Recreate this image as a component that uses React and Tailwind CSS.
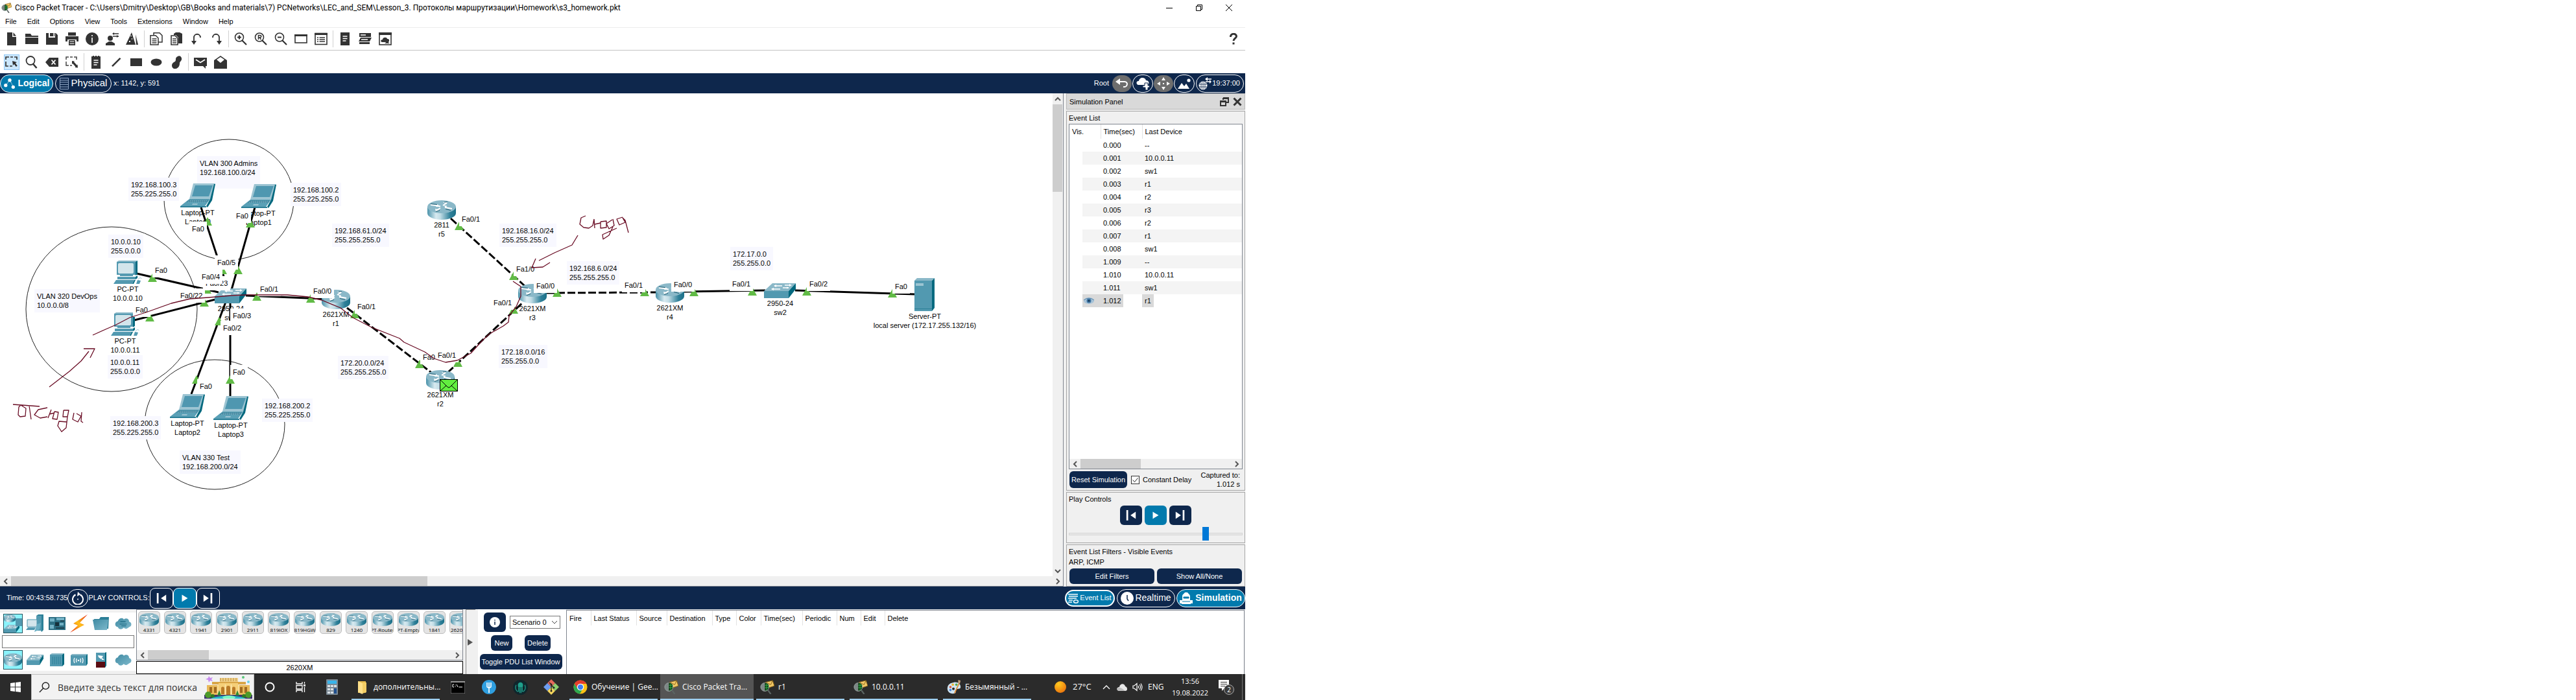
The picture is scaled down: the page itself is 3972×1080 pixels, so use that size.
import React from "react";

const NAVY = "#0e274c";

/* ---------- shared drawings ---------- */

function Gradients() {
  return (
    <svg width="0" height="0" className="absolute" aria-hidden="true">
      <defs>
        <linearGradient id="metal" x1="0" x2="1" y1="0" y2="0">
          <stop offset="0" stopColor="#4a92aa" />
          <stop offset="0.3" stopColor="#d8eaf0" />
          <stop offset="0.45" stopColor="#c2dde6" />
          <stop offset="0.8" stopColor="#2f8099" />
          <stop offset="1" stopColor="#1d7088" />
        </linearGradient>
        <linearGradient id="cloudFill" x1="0" x2="1" y1="0" y2="1">
          <stop offset="0" stopColor="#3f8ba3" />
          <stop offset="1" stopColor="#7fb9cc" />
        </linearGradient>
        <linearGradient id="bolt" x1="1" x2="0" y1="0" y2="1">
          <stop offset="0" stopColor="#e5261a" />
          <stop offset="0.5" stopColor="#ffc21a" />
          <stop offset="1" stopColor="#e5261a" />
        </linearGradient>
        <radialGradient id="sun" cx="0.35" cy="0.25" r="0.9">
          <stop offset="0" stopColor="#ffc91f" />
          <stop offset="1" stopColor="#e8690b" />
        </radialGradient>
      </defs>
    </svg>
  );
}

function RouterArt({ className }) {
  return (
    <svg viewBox="0 0 44 30" className={className} preserveAspectRatio="none" aria-hidden="true">
      <path d="M0 10v10c0 5.500 9.800 10 22 10s22-4.500 22-10V10z" fill="url(#metal)" />
      <ellipse cx="22" cy="10" rx="22" ry="10" fill="#8ab8c8" />
      <g stroke="#fff" strokeWidth="2" fill="none">
        <path d="M5 7l12 1.500M15 8.500l5 1M27 11l11 2" />
        <path d="M30 4l-6 4M13 16l7-4" />
      </g>
      <g fill="#fff">
        <path d="M15 6l5 4-7 0zM25 8l5 .5-1 3zM24 3l7 0-2 3zM12 13l1 4 6-2z" />
      </g>
      <g stroke="#1c5b70" strokeWidth="1" fill="none">
        <path d="M5 5.500l10 1M26 3l5-.5M28 13.500l8 2M13 17.500l6-2" />
      </g>
    </svg>
  );
}

function SwitchArt({ className }) {
  return (
    <svg viewBox="0 0 49 23" className={className} preserveAspectRatio="none" aria-hidden="true">
      <path d="M0 12L13 0h36L38 12z" fill="#8ab8c8" />
      <path d="M0 12h38v11H0z" fill="#5299b0" />
      <path d="M38 12L49 0v9L38 23z" fill="#04697f" />
      <g stroke="#fff" strokeWidth="1.300" fill="none">
        <path d="M16 4h12M32 3h9M12 9h13M29 7h9" />
      </g>
      <path d="M15 4l4-2v4zM43 3l-4-2v4zM11 9l4-2v4zM39 7l-4-1.500v3z" fill="#fff" />
    </svg>
  );
}

function LaptopArt({ className }) {
  return (
    <svg viewBox="0 0 54 37" className={className} preserveAspectRatio="none" aria-hidden="true">
      <path d="M20 0h34l-2 5-6 19H14z" fill="#9cc4d2" />
      <path d="M23 3h27l-6 17H18z" fill="#4f97b0" />
      <path d="M52 1h2l-5 25-7 11-2-2 6-11z" fill="#04697f" />
      <path d="M14 24h32L38 35H0z" fill="#5aa0b6" />
      <path d="M15 25h29l-3 4H9z" fill="#468ba2" />
      <path d="M15 26.500h27M12 28.500h28" stroke="#8ab8c8" strokeWidth="0.700" strokeDasharray="2 1" />
      <path d="M0 35h40v2H0z" fill="#2b7f97" />
      <path d="M19 31h8l-1 2h-8z" fill="#9cc4d2" />
    </svg>
  );
}

function PcArt({ className }) {
  return (
    <svg viewBox="0 0 44 36" className={className} preserveAspectRatio="none" aria-hidden="true">
      <path d="M5 2l3-2h29l-3 2z" fill="#8ab8c8" />
      <path d="M34 2l3-2v21l-3 2z" fill="#04697f" />
      <path d="M5 2h29v20H5z" fill="#5299b0" />
      <rect x="7" y="4" width="24" height="16" rx="2" fill="#d3e5eb" />
      <path d="M10 22h20v2H10zM6 25h28v4H6z" fill="#5299b0" />
      <path d="M34 25l3-2v4l-3 2z" fill="#04697f" />
      <path d="M4 30h28l-3 6H0z" fill="#5299b0" />
      <path d="M32 30h2l-3 6h-2z" fill="#04697f" />
      <path d="M37 30l5 1-2 5h-5z" fill="#5299b0" />
      <path d="M38 29c2-3 5-3 5-1" stroke="#9cc4d2" fill="none" />
    </svg>
  );
}

function ServerArt({ className }) {
  return (
    <svg viewBox="0 0 31 51" className={className} preserveAspectRatio="none" aria-hidden="true">
      <path d="M0 4l4-4h27l-4 4z" fill="#8ab8c8" />
      <path d="M0 4h27v47H0z" fill="#5299b0" />
      <path d="M27 4l4-4v46l-4 5z" fill="#04697f" />
      <path d="M2 8h12v4H2z" fill="#9cc4d2" />
      <path d="M0 47.500h27" stroke="#2b7f97" />
    </svg>
  );
}

/* ---------- toolbar icons, 20x20 ---------- */

const ICONS = {
  newFile: <path d="M3 0h8v7h6v13H3zM12.500 0L17 5.500h-4.500z" />,
  open: <path d="M0 2h8l2 3h10v2H0zM0 8h20v10H0z" />,
  save: <path d="M1 1h4v7h10V1h1l3 3v15H1zM7 1h5v5H7zM13 1h1v5h-1z" />,
  print: (
    <>
      <path d="M4 0h12v5H4zM0 6h20v8h-3v-3H3v3H0z" />
      <path d="M5 12h10v8H5z" />
      <path d="M6.500 14h7v1h-7zM6.500 17h7v1h-7z" fill="#fff" />
    </>
  ),
  info: (
    <>
      <circle cx="10" cy="10" r="10" />
      <path d="M9 4h2v2H9zM9 8h2v8H9z" fill="#ddd" />
    </>
  ),
  user: (
    <>
      <circle cx="7" cy="9" r="4" />
      <path d="M0 20v-3l5-3h4l5 3v3z" />
      <path d="M11 2h9M11 6h9" stroke="#333" strokeWidth="1.500" />
      <path d="M10 2l3-2v4zM20 6l-3-2v4z" />
    </>
  ),
  wizard: (
    <>
      <path d="M9 0l6 19H0z" />
      <path d="M15 3l4 16h-3z" />
      <path d="M5 13h2v2H5zM9 9h1v2H9zM7 5h2v1H7z" fill="#fff" />
    </>
  ),
  copy: (
    <>
      <path d="M6 .8h9l4 4V15H6z" fill="#fff" stroke="#333" strokeWidth="1.500" />
      <path d="M1 4.800h8l4 4V19H1z" fill="#fff" stroke="#333" strokeWidth="1.500" />
      <path d="M3.500 10h7M3.500 13h7M3.500 16h7" stroke="#333" strokeWidth="1.500" />
    </>
  ),
  paste: (
    <>
      <path d="M6 2l3-2h6l4 2v15h-6V8L9 4H6z" />
      <path d="M2 5h6l4 4v10H2z" fill="#fff" stroke="#333" strokeWidth="1.600" />
      <path d="M4 10h6M4 13h6M4 16h6" stroke="#333" strokeWidth="1.500" />
    </>
  ),
  undo: (
    <>
      <path d="M6 15V8c0-7 10-7 10 0" fill="none" stroke="#333" strokeWidth="1.800" />
      <path d="M2 13h8l-4 6z" />
    </>
  ),
  redo: (
    <>
      <path d="M14 15V8c0-7-10-7-10 0" fill="none" stroke="#333" strokeWidth="1.800" />
      <path d="M10 13h8l-4 6z" />
    </>
  ),
  zoomIn: (
    <>
      <circle cx="8" cy="7.500" r="6.500" fill="none" stroke="#333" strokeWidth="1.600" />
      <path d="M12 12l7 7M8 4.500v6M5 7.500h6" stroke="#333" strokeWidth="2.200" />
    </>
  ),
  zoomReset: (
    <>
      <circle cx="8" cy="7.500" r="6.500" fill="none" stroke="#333" strokeWidth="1.600" />
      <path d="M12 12l7 7" stroke="#333" strokeWidth="2.200" />
      <path d="M6.500 11V4.500h2c3 0 3 3.300 0 3.300h-2M8.500 8l2 3" fill="none" stroke="#333" strokeWidth="1.500" />
    </>
  ),
  zoomOut: (
    <>
      <circle cx="8" cy="7.500" r="6.500" fill="none" stroke="#333" strokeWidth="1.600" />
      <path d="M12 12l7 7M5 7.500h6" stroke="#333" strokeWidth="2.200" />
    </>
  ),
  windowBox: (
    <>
      <rect x="1" y="4" width="18" height="12" fill="#fff" stroke="#333" strokeWidth="1.600" />
      <path d="M0 3h20v3H0z" />
    </>
  ),
  listBox: (
    <>
      <rect x="1" y="1.500" width="18" height="17" fill="#fff" stroke="#333" strokeWidth="1.600" />
      <path d="M0 1h20v3H0z" />
      <path d="M4 8h2M7.500 8H16M4 11h2M7.500 11H16M4 14h2M7.500 14H16" stroke="#333" strokeWidth="1.700" />
    </>
  ),
  notes: (
    <>
      <path d="M3 0h14v20H3z" />
      <path d="M6.500 6h7M6.500 9.500h7M6.500 13h5" stroke="#fff" strokeWidth="1.400" />
    </>
  ),
  servers: (
    <>
      <path d="M1 1h18v6H1zM3 8h17l-3 6H0zM1 15h16v3H1z" />
      <path d="M3 4h8M4 11h10" stroke="#fff" strokeWidth="1.300" />
    </>
  ),
  cloudWindow: (
    <>
      <rect x="1" y="1" width="18" height="18" fill="#fff" stroke="#333" strokeWidth="1.600" />
      <path d="M0 0h20v4H0z" />
      <path d="M5 15c-3-1-2-4 1-4 0-4 7-4 7-1 4-1 4 5 1 5zM13 14l4 3H9z" />
    </>
  ),
  select: (
    <>
      <path d="M1 6V2h5M8 2h4M14 2h4v4M1 9v7h4M7 16h4" fill="none" stroke="#333" strokeWidth="1.700" />
      <path d="M11 8l7 2-2.200 1.500 3 4-2 1.500-3-4L12 15z" />
    </>
  ),
  inspect: (
    <>
      <circle cx="8" cy="7.500" r="6.500" fill="none" stroke="#333" strokeWidth="1.800" />
      <path d="M11.500 12l6 7" stroke="#333" strokeWidth="2.600" />
    </>
  ),
  erase: (
    <>
      <path d="M6 3h14v14H6l-6-7z" />
      <path d="M9.500 6.500l6 7M15.500 6.500l-6 7" stroke="#fff" strokeWidth="1.800" />
    </>
  ),
  resize: (
    <>
      <path d="M1 6V2h4M7 2h4M13 2h4v4M1 9v6h4M7 15h3" fill="none" stroke="#444" strokeWidth="1.500" />
      <path d="M10 8l4 .5-1 1 4.500 5 1-1 .5 5-4.500-.5 1-1-4.500-5-1 1z" />
    </>
  ),
  notepad: (
    <>
      <path d="M3 1h2V0h2v1h2V0h2v1h2V0h2v1h2v19H3z" />
      <path d="M6.500 7h7M6.500 10.500h7M6.500 14h5" stroke="#fff" strokeWidth="1.400" />
    </>
  ),
  line: <path d="M3 15.500L15.500 3l2 1.500L5 17z" />,
  rect: <path d="M1 4h18v12H1z" />,
  ellipse: <ellipse cx="10" cy="10" rx="8.500" ry="5.500" />,
  freeform: <path d="M12 1c3-2 7 1 6 5-1 3-3 3-3 6 0 6-5 9-9 8-4-2-4-8 0-10 3-1 3-3 3-5 0-2 1-3 3-4z" />,
  simplePdu: (
    <>
      <path d="M0 3h20v13h-2v4l-4-4H0z" />
      <path d="M3 6l7 4.500L17 6" fill="none" stroke="#fff" strokeWidth="1.700" />
    </>
  ),
  complexPdu: (
    <>
      <path d="M0 7l10-7 10 7v13H0z" />
      <path d="M4 6l6-4 6 4-6 5z" fill="#fff" />
    </>
  ),
};

function ToolButton({ name, label, active }) {
  return (
    <button aria-label={label} className="flex w-[31px] items-center justify-center">
      <span
        className={
          active
            ? "flex size-6 items-center justify-center border border-[#90c8f6] bg-[#cce8ff]"
            : "flex size-6 items-center justify-center"
        }
      >
        <svg viewBox="0 0 20 20" className="size-5" fill="#333333" aria-hidden="true">
          {ICONS[name]}
        </svg>
      </span>
    </button>
  );
}

function Divider() {
  return (
    <span className="flex w-1.5 justify-center">
      <span className="w-px bg-[#d0d0d0]" />
    </span>
  );
}

function TracerIcon({ className }) {
  return (
    <svg viewBox="0 0 24 24" className={className} aria-hidden="true">
      <path d="M9 4l12-3 3 9-12 4z" fill="#f1c766" stroke="#8a6417" />
      <path d="M9 4l9 4 3-7" fill="none" stroke="#8a6417" />
      <circle cx="8" cy="12" r="7" fill="#7d8786" stroke="#9aa5a3" />
      <path d="M8 5a7 7 0 0 1 6 3v7a7 7 0 0 1-6 3z" fill="#0b3c12" />
      <path d="M8 9h7M8 13h7M11 6v12" stroke="#36b14a" strokeWidth="1" />
      <path d="M13 17l5 7" stroke="#5b6463" strokeWidth="2.500" />
    </svg>
  );
}

/* ---------- top of the window ---------- */

function TitleBar() {
  return (
    <header className="flex h-6 shrink-0 items-center pl-0.5">
      <TracerIcon className="size-4 shrink-0" />
      <h1 className="ml-[5px] whitespace-nowrap font-[Roboto,'Open_Sans',sans-serif] text-[12px] leading-6">
        Cisco Packet Tracer - C:\Users\Dmitry\Desktop\GB\Books and materials\7) PCNetworks\LEC_and_SEM\Lesson_3.
        Протоколы маршрутизации\Homework\s3_homework.pkt
      </h1>
      <div className="ml-auto flex pr-0.5 text-black">
        <button aria-label="Minimize" className="flex w-[46px] items-center justify-center">
          <svg viewBox="0 0 10 10" className="size-2.5" stroke="currentColor" fill="none">
            <path d="M0 5.500h10" />
          </svg>
        </button>
        <button aria-label="Restore" className="flex w-[46px] items-center justify-center">
          <svg viewBox="0 0 10 10" className="size-2.5" stroke="currentColor" fill="none">
            <path d="M.5 2.500h7v7h-7zM2.500 2.500v-2h7v7h-2" />
          </svg>
        </button>
        <button aria-label="Close" className="flex w-[46px] items-center justify-center">
          <svg viewBox="0 0 10 10" className="size-2.5" stroke="currentColor" fill="none">
            <path d="M0 0l10 10M10 0L0 10" />
          </svg>
        </button>
      </div>
    </header>
  );
}

const MENUS = ["File", "Edit", "Options", "View", "Tools", "Extensions", "Window", "Help"];

function MenuBar() {
  return (
    <nav className="flex h-[19px] shrink-0 items-center gap-4 border-b border-[#ececec] pl-2 text-[11px]">
      {MENUS.map((m) => (
        <button key={m}>{m}</button>
      ))}
    </nav>
  );
}

function Toolbars() {
  return (
    <>
      <div className="flex h-[35px] shrink-0 items-stretch border-b border-[#c3c3c3] py-1 pl-0.5">
        <ToolButton name="newFile" label="New" />
        <ToolButton name="open" label="Open" />
        <ToolButton name="save" label="Save" />
        <ToolButton name="print" label="Print" />
        <ToolButton name="info" label="Network information" />
        <ToolButton name="user" label="User profile" />
        <ToolButton name="wizard" label="Activity wizard" />
        <Divider />
        <ToolButton name="copy" label="Copy" />
        <ToolButton name="paste" label="Paste" />
        <ToolButton name="undo" label="Undo" />
        <ToolButton name="redo" label="Redo" />
        <Divider />
        <ToolButton name="zoomIn" label="Zoom in" />
        <ToolButton name="zoomReset" label="Zoom reset" />
        <ToolButton name="zoomOut" label="Zoom out" />
        <ToolButton name="windowBox" label="Toggle workspace" />
        <ToolButton name="listBox" label="Viewport list" />
        <Divider />
        <ToolButton name="notes" label="Palette" />
        <ToolButton name="servers" label="Custom devices" />
        <ToolButton name="cloudWindow" label="Cluster" />
        <button aria-label="Help contents" className="ml-auto mr-3 flex items-center">
          <svg viewBox="0 0 12 18" className="h-[18px] w-3" fill="none" stroke="#333" strokeWidth="3" aria-hidden="true">
            <path d="M1.500 6C1 0 10.500 0 10.500 5c0 3-4.500 3.500-4.500 7" />
            <path d="M6 14.500v3" />
          </svg>
        </button>
      </div>
      <div className="flex h-[35px] shrink-0 items-stretch py-1 pl-0.5">
        <ToolButton name="select" label="Select" active />
        <ToolButton name="inspect" label="Inspect" />
        <ToolButton name="erase" label="Delete" />
        <ToolButton name="resize" label="Resize shape" />
        <Divider />
        <ToolButton name="notepad" label="Place note" />
        <ToolButton name="line" label="Draw line" />
        <ToolButton name="rect" label="Draw rectangle" />
        <ToolButton name="ellipse" label="Draw ellipse" />
        <ToolButton name="freeform" label="Draw freeform" />
        <Divider />
        <ToolButton name="simplePdu" label="Add simple PDU" />
        <ToolButton name="complexPdu" label="Add complex PDU" />
      </div>
    </>
  );
}

function ViewBar() {
  return (
    <div className="flex h-[31px] shrink-0 items-center bg-[#0e274c] text-[11px] text-white">
      <button className="flex h-7 w-[82px] items-center justify-center gap-0.5 rounded-[14px] border border-white bg-[#027aad] text-[14px] font-bold">
        <svg viewBox="0 0 20 18" className="h-4 w-5" fill="#fff" aria-hidden="true">
          <path d="M3 12L10 3l6 11" stroke="#fff" fill="none" strokeDasharray="2 1" />
          <circle cx="3" cy="12" r="3" />
          <circle cx="10" cy="3" r="3" />
          <circle cx="16" cy="15" r="3" />
        </svg>
        Logical
      </button>
      <button className="ml-[3px] flex h-7 w-[87px] items-center justify-center gap-1 rounded-[14px] border border-white text-[15px]">
        <svg viewBox="0 0 14 18" className="h-[18px] w-3.5" fill="none" stroke="#8fa6c4" aria-hidden="true">
          <path d="M.5.500h13v17H.500zM1 4h12M1 7h12M1 10.500h12M1 14h12" />
        </svg>
        Physical
      </button>
      <span className="ml-[3px]">x: 1142, y: 591</span>
      <span className="ml-auto mr-[5px]">Root</span>
      <button aria-label="Back" className="flex h-[26px] w-[30px] items-center justify-center rounded-full bg-[#6d6d6d]">
        <svg viewBox="0 0 20 16" className="h-4 w-5" aria-hidden="true">
          <path d="M4 5h10c6 0 5 9-2 8" fill="none" stroke="#fff" strokeWidth="2" />
          <path d="M0 5l7-5v10z" fill="#fff" />
        </svg>
      </button>
      <button aria-label="New cluster" className="ml-px flex h-7 w-8 items-center justify-center rounded-full border border-white">
        <svg viewBox="0 0 20 20" className="size-5" fill="#fff" aria-hidden="true">
          <path d="M3 12c-4-1-3-7 1-6 1-7 10-6 11-1 5 0 6 6 2 7z" />
          <path d="M13 9h5v4h3v3h-3v4h-4v-4h-4v-3h3z" stroke="#0e274c" />
        </svg>
      </button>
      <button aria-label="Move object" className="ml-px flex h-[26px] w-[30px] items-center justify-center rounded-full bg-[#6d6d6d]">
        <svg viewBox="0 0 20 20" className="size-5" fill="#fff" aria-hidden="true">
          <path d="M10 0l3 5H7zM10 20l3-5H7zM0 10l5-3v6zM20 10l-5-3v6zM9 9h2v2H9z" />
        </svg>
      </button>
      <button aria-label="Set background" className="ml-px flex h-7 w-8 items-center justify-center rounded-full border border-white">
        <svg viewBox="0 0 20 16" className="h-4 w-5" fill="#fff" aria-hidden="true">
          <path d="M0 16L6 7l4 5 3-4 5 8z" />
          <circle cx="17" cy="3" r="2.600" />
        </svg>
      </button>
      <button className="ml-0.5 mr-0.5 flex h-7 w-[74px] items-center justify-between rounded-[14px] border border-white pl-[3px] pr-[5px]">
        <svg viewBox="0 0 20 20" className="size-5" aria-hidden="true">
          <circle cx="7" cy="13" r="6.500" fill="#fff" />
          <path d="M1 11h12M1 15h12M4 8v10M7 7v12M10 8v10" stroke="#0e274c" strokeWidth="0.800" />
          <path d="M11 3h9M11 7h7" stroke="#fff" strokeWidth="1.500" />
          <path d="M10 3l4-3v6zM20 7l-3-3v6z" fill="#fff" />
        </svg>
        19:37:00
      </button>
    </div>
  );
}

/* ---------- topology: window coordinates, shifted to the canvas when drawn ---------- */

const CANVAS_Y = 144;

const NOTES = [
  { x: 304, y: 241, w: 97, h: 50, lines: ["VLAN 300 Admins", "192.168.100.0/24"] },
  { x: 198, y: 274, lines: ["192.168.100.3", "255.225.255.0"] },
  { x: 448, y: 282, lines: ["192.168.100.2", "255.225.255.0"] },
  { x: 167, y: 362, lines: ["10.0.0.10", "255.0.0.0"] },
  { x: 53, y: 446, lines: ["VLAN 320 DevOps", "10.0.0.0/8"] },
  { x: 166, y: 548, lines: ["10.0.0.11", "255.0.0.0"] },
  { x: 170, y: 642, lines: ["192.168.200.3", "255.225.255.0"] },
  { x: 404, y: 615, lines: ["192.168.200.2", "255.225.255.0"] },
  { x: 277, y: 695, lines: ["VLAN 330 Test", "192.168.200.0/24"] },
  { x: 512, y: 345, lines: ["192.168.61.0/24", "255.255.255.0"] },
  { x: 521, y: 549, lines: ["172.20.0.0/24", "255.255.255.0"] },
  { x: 770, y: 345, lines: ["192.168.16.0/24", "255.255.255.0"] },
  { x: 874, y: 403, lines: ["192.168.6.0/24", "255.255.255.0"] },
  { x: 769, y: 532, lines: ["172.18.0.0/16", "255.255.0.0"] },
  { x: 1126, y: 381, lines: ["172.17.0.0", "255.255.0.0"] },
];

const SIZES = {
  laptop: [54, 37, LaptopArt],
  pc: [44, 36, PcArt],
  router: [44, 30, RouterArt],
  switch: [49, 23, SwitchArt],
  server: [31, 51, ServerArt],
};

const DEVICES = [
  { kind: "laptop", x: 278, y: 283, lines: ["Laptop-PT", "Laptop0"] },
  { kind: "laptop", x: 372, y: 284, lines: ["Laptop-PT", "Laptop1"] },
  { kind: "laptop", x: 262, y: 608, lines: ["Laptop-PT", "Laptop2"] },
  { kind: "laptop", x: 329, y: 611, lines: ["Laptop-PT", "Laptop3"] },
  { kind: "pc", x: 175, y: 402, lines: ["PC-PT", "10.0.0.10"] },
  { kind: "pc", x: 171, y: 482, lines: ["PC-PT", "10.0.0.11"] },
  { kind: "switch", x: 331, y: 445, lines: ["2950-24", "sw1"] },
  { kind: "router", x: 496, y: 447, lines: ["2621XM", "r1"] },
  { kind: "router", x: 659, y: 309, lines: ["2811", "r5"] },
  { kind: "router", x: 799, y: 438, lines: ["2621XM", "r3"] },
  { kind: "router", x: 657, y: 571, lines: ["2621XM", "r2"] },
  { kind: "router", x: 1011, y: 437, lines: ["2621XM", "r4"] },
  { kind: "switch", x: 1178, y: 437, lines: ["2950-24", "sw2"] },
  { kind: "server", x: 1410, y: 429, lines: ["Server-PT", "local server (172.17.255.132/16)"] },
];

const LINKS = [
  [310, 320, 355, 457],
  [393, 320, 357, 447],
  [211, 422, 337, 451],
  [207, 494, 332, 462],
  [379, 456, 498, 461],
  [295, 608, 348, 466],
  [355, 611, 355, 466],
  [535, 475, 668, 577, true],
  [690, 575, 807, 466, true],
  [695, 337, 809, 441, true],
  [843, 452, 1012, 451, true],
  [1054, 450, 1180, 448],
  [1226, 448, 1411, 454],
];

/* centre of base */
const LIGHTS = [
  [320, 348], [386, 351], [343, 423], [367, 423], [235, 435], [319, 453], [315, 473], [231, 496],
  [396, 464], [479, 467], [547, 491], [338, 502], [303, 592], [355, 592], [647, 568], [706, 566],
  [792, 484], [792, 432], [708, 355], [859, 458], [994, 457], [1070, 457], [1160, 456], [1244, 456], [1376, 459],
];

/* text left, text middle */
const PORTS = [
  [317, 437, "Fa0/23"], [296, 353, "Fa0"], [364, 333, "Fa0"], [335, 405, "Fa0/5"], [311, 427, "Fa0/4"],
  [278, 456, "Fa0/22"], [239, 417, "Fa0"], [401, 446, "Fa0/1"], [483, 449, "Fa0/0"], [551, 473, "Fa0/1"],
  [209, 478, "Fa0"], [359, 487, "Fa0/3"], [344, 506, "Fa0/2"], [359, 574, "Fa0"], [308, 596, "Fa0"],
  [652, 551, "Fa0/0"], [675, 548, "Fa0/1"], [712, 338, "Fa0/1"], [796, 415, "Fa1/0"], [827, 441, "Fa0/0"],
  [761, 467, "Fa0/1"], [963, 440, "Fa0/1"], [1039, 439, "Fa0/0"], [1129, 438, "Fa0/1"], [1248, 438, "Fa0/2"],
  [1380, 442, "Fa0"],
];

const INK = [
  "M143 517L163 508L179 501L200 490L225 482L264 468L293 461L321 459L357 456L379 455H443L475 458L496 463L525 475L544 490L573 505L616 522L623 528L655 543L669 553L687 559L705 556L726 545L744 525L755 515L776 503L784 497L785 487L796 473L803 457V442L791 434",
  "M76 597L107 573L125 557L137 542M129 538H146L139 552",
  "M20 624L61 627M32 625L29 628L28 640L31 643L39 642L40 630L32 625M45 626L48 647M73 629L59 632L53 640L62 645L73 643M79 632L74 645M76 639L84 637M84 635L81 646L88 647L90 636L84 635M98 633L97 643L104 643L106 633L98 633M104 643L102 660L95 666L89 657L91 650L103 651M114 637L112 647L120 651L125 642L118 638M126 636L125 650L128 652",
  "M903 333L896 336L894 346L900 351L908 352L914 348L916 338M916 338L917 352M917 346L926 344M926 342L926 352L935 351L935 341L926 342M944 339L935 345L939 353L947 348L945 338M945 350L939 363L930 369L929 362L951 352M960 335L951 338L955 347L964 343L960 336L964 340L969 359",
  "M891 363L882 378L855 390L831 402M826 399L820 413L837 412L848 405",
];

function Topology() {
  return (
    <div className="relative min-w-0 flex-1 overflow-hidden bg-white text-[11px] leading-[14px] text-black">
      <svg className="absolute inset-0 size-full" aria-hidden="true">
        <g transform="translate(0 -144)" fill="none" stroke="#222">
          <ellipse cx="353" cy="308" rx="100" ry="93" />
          <ellipse cx="172" cy="477" rx="132" ry="127" />
          <ellipse cx="331" cy="655" rx="108" ry="100" />
        </g>
      </svg>
      {NOTES.map((n, i) => (
        <div
          key={i}
          className="absolute whitespace-nowrap bg-[#f8f8ff] p-1"
          style={{ left: n.x, top: n.y - CANVAS_Y, width: n.w, height: n.h }}
        >
          {n.lines.map((l) => (
            <div key={l}>{l}</div>
          ))}
        </div>
      ))}
      {DEVICES.map((d, i) => {
        const [w, h] = SIZES[d.kind];
        return (
          <div
            key={i}
            className="absolute -translate-x-1/2 whitespace-nowrap text-center"
            style={{ left: d.x + Math.round(w / 2), top: d.y + h + 1 - CANVAS_Y }}
          >
            {d.lines.map((l) => (
              <div key={l}>{l}</div>
            ))}
          </div>
        );
      })}
      <svg className="absolute inset-0 size-full" aria-hidden="true">
        <g transform="translate(0 -144)">
          {LINKS.map(([x1, y1, x2, y2, dashed], i) => (
            <line
              key={i}
              x1={x1}
              y1={y1}
              x2={x2}
              y2={y2}
              stroke="#000"
              strokeWidth="3"
              strokeDasharray={dashed ? "12 4" : undefined}
            />
          ))}
          {LIGHTS.map(([x, y], i) => (
            <path key={i} d={`M${x - 7} ${y}h14l-7-13z`} fill="#61bb46" />
          ))}
        </g>
      </svg>
      {DEVICES.map((d, i) => {
        const [w, h, Art] = SIZES[d.kind];
        return (
          <div key={i} className="absolute" style={{ left: d.x, top: d.y - CANVAS_Y, width: w, height: h }}>
            <Art className="size-full" />
          </div>
        );
      })}
      {PORTS.map(([x, y, t], i) => (
        <div
          key={i}
          className="absolute whitespace-nowrap bg-white p-1"
          style={{ left: x - 4, top: y - 11 - CANVAS_Y }}
        >
          {t}
        </div>
      ))}
      <svg className="absolute inset-0 size-full" aria-hidden="true">
        <g transform="translate(0 -144)" fill="none">
          <rect x="678.500" y="585.500" width="27" height="18" fill="#62ee40" stroke="#000" />
          <path d="M679 586l11 11q2 2 4 0l11-11M679 603l9-8M705 603l-9-8" stroke="#000" />
          {INK.map((d) => (
            <path key={d} d={d} stroke="#6a0d25" strokeWidth="1.300" strokeLinejoin="round" />
          ))}
        </g>
      </svg>
    </div>
  );
}

/* ---------- scroll bars ---------- */

function Arrow({ dir }) {
  const d = { left: "M7 1L3 5l4 4", right: "M3 1l4 4-4 4", up: "M1 7l4-4 4 4", down: "M1 3l4 4 4-4" }[dir];
  return (
    <svg viewBox="0 0 10 10" className="size-2.5" fill="none" stroke="#555" strokeWidth="2" aria-hidden="true">
      <path d={d} />
    </svg>
  );
}

function HScroll({ thumb }) {
  return (
    <div className="flex h-[15px] shrink-0 items-stretch bg-[#f0f0f0]">
      <button aria-label="Scroll left" className="flex w-[17px] items-center justify-center">
        <Arrow dir="left" />
      </button>
      <div className="flex min-w-0 flex-1">
        <div className={thumb} />
      </div>
      <button aria-label="Scroll right" className="flex w-[17px] items-center justify-center">
        <Arrow dir="right" />
      </button>
    </div>
  );
}

/* ---------- simulation panel ---------- */

const EVENTS = [
  ["0.000", "--"], ["0.001", "10.0.0.11"], ["0.002", "sw1"], ["0.003", "r1"], ["0.004", "r2"],
  ["0.005", "r3"], ["0.006", "r2"], ["0.007", "r1"], ["0.008", "sw1"], ["1.009", "--"],
  ["1.010", "10.0.0.11"], ["1.011", "sw1"], ["1.012", "r1"],
];

const PLAY_PATHS = {
  back: <path d="M2 1h3v18H2zM9 10l9-6v12z" />,
  play: <path d="M5 4l10 6-10 6z" />,
  next: <path d="M2 4l9 6-9 6zM14 1h3v18h-3z" />,
};

function PlayButton({ kind, label, className }) {
  return (
    <button aria-label={label} className={className}>
      <svg viewBox="0 0 20 20" className="size-[18px]" fill="#fff" aria-hidden="true">
        {PLAY_PATHS[kind]}
      </svg>
    </button>
  );
}

function EventTable() {
  return (
    <div className="flex min-h-0 flex-1 flex-col border border-[#7f858f] bg-white">
      <div className="min-h-0 flex-1 overflow-hidden">
        <table className="w-full table-fixed border-collapse text-left">
          <thead>
            <tr className="h-[22px]">
              <th className="w-12 border-r border-[#e2e2e2] pl-1 font-normal">Vis.</th>
              <th className="w-16 border-r border-[#e2e2e2] pl-1 font-normal">Time(sec)</th>
              <th className="pl-1 font-normal">Last Device</th>
            </tr>
          </thead>
          <tbody>
            {EVENTS.map(([t, d], i) => {
              const last = i === EVENTS.length - 1;
              const stripe = i % 2 === 1 ? "bg-[#f4f4f4]" : "";
              return (
                <tr key={i} className="h-5">
                  <td className="p-0">
                    <div className={`ml-5 flex h-5 items-center pl-0.5 ${last ? "bg-[#d9d9d9]" : stripe}`}>
                      {last && (
                        <svg viewBox="0 0 16 10" className="h-2.5 w-4" role="img" aria-label="Visible">
                          <ellipse cx="8" cy="5" rx="8" ry="5" fill="#a8c3d8" />
                          <circle cx="8" cy="5" r="3.500" fill="#3f75a3" />
                          <circle cx="8" cy="5" r="1.500" fill="#12324f" />
                          <path d="M0 4q8-6 16 0" stroke="#5b87ab" fill="none" />
                        </svg>
                      )}
                    </div>
                  </td>
                  <td className={`p-0 ${stripe}`}>
                    <span className={`inline-block h-5 pl-1 pr-[3px] align-top leading-5 ${last ? "bg-[#d9d9d9]" : ""}`}>{t}</span>
                  </td>
                  <td className={`p-0 ${stripe}`}>
                    <span className={`inline-block h-5 pl-1 pr-1 align-top leading-5 ${last ? "bg-[#d9d9d9]" : ""}`}>{d}</span>
                  </td>
                </tr>
              );
            })}
          </tbody>
        </table>
      </div>
      <HScroll thumb="w-[40%] bg-[#cdcdcd]" />
    </div>
  );
}

const BOX = "flex flex-col border border-[#a5a5a5] px-[3px]";

function SimulationPanel() {
  return (
    <aside className="flex w-[276px] shrink-0 flex-col gap-0.5 text-[11px] leading-[14px] text-black">
      <div className="flex h-[25px] shrink-0 items-center border border-[#b9b9b9] bg-[#d9d9d9] pl-1 pr-1">
        <h2>Simulation Panel</h2>
        <button aria-label="Float panel" className="ml-auto">
          <svg viewBox="0 0 14 14" className="size-3.5" fill="none" stroke="#333" strokeWidth="2" aria-hidden="true">
            <path d="M5 1h8v7h-3M5 1v3M1 6h8v7H1zM1 7h8M5 2h8" />
          </svg>
        </button>
        <button aria-label="Close panel" className="ml-1.5">
          <svg viewBox="0 0 14 14" className="size-3.5" stroke="#333" strokeWidth="3" aria-hidden="true">
            <path d="M1.500 1.500l11 11M12.500 1.500l-11 11" />
          </svg>
        </button>
      </div>

      <section className={`min-h-0 flex-1 ${BOX}`}>
        <h3 className="pb-0.5 pt-[3px]">Event List</h3>
        <EventTable />
        <div className="flex h-8 items-center">
          <button className="ml-px h-[26px] w-[89px] whitespace-nowrap rounded-md bg-[#0e274c] text-white">Reset Simulation</button>
          <label className="ml-1.5 flex items-center gap-[5px] whitespace-nowrap">
            <span className="relative flex">
              <input type="checkbox" defaultChecked className="size-[13px] appearance-none border border-[#333] bg-white" />
              <svg viewBox="0 0 13 13" className="pointer-events-none absolute inset-0 size-[13px]" fill="none" stroke="#222" aria-hidden="true">
                <path d="M2.500 6.500l3 3 5-6" />
              </svg>
            </span>
            Constant Delay
          </label>
          <p className="ml-auto whitespace-nowrap pr-1 text-right">
            Captured to:
            <br />
            1.012 s
          </p>
        </div>
      </section>

      <section className={`h-[79px] shrink-0 ${BOX}`}>
        <h3 className="pt-[3px]">Play Controls</h3>
        <div className="mt-[3px] flex justify-center gap-1">
          <PlayButton kind="back" label="Go back" className="flex h-[30px] w-[34px] items-center justify-center rounded-md bg-[#0e274c]" />
          <PlayButton kind="play" label="Play" className="flex h-[30px] w-[34px] items-center justify-center rounded-md bg-[#027aad]" />
          <PlayButton kind="next" label="Go forward" className="flex h-[30px] w-[34px] items-center justify-center rounded-md bg-[#0e274c]" />
        </div>
        <input
          type="range"
          aria-label="Play speed"
          min="0"
          max="100"
          defaultValue="80"
          className="mt-1 h-5 w-full appearance-none bg-transparent [&::-webkit-slider-runnable-track]:h-1 [&::-webkit-slider-runnable-track]:border [&::-webkit-slider-runnable-track]:border-[#d6d6d6] [&::-webkit-slider-runnable-track]:bg-[#e7e7e7] [&::-webkit-slider-thumb]:-mt-[10px] [&::-webkit-slider-thumb]:h-[21px] [&::-webkit-slider-thumb]:w-2.5 [&::-webkit-slider-thumb]:appearance-none [&::-webkit-slider-thumb]:bg-[#0078d7]"
        />
      </section>

      <section className={`h-[65px] shrink-0 ${BOX}`}>
        <h3 className="pt-[3px]">Event List Filters - Visible Events</h3>
        <p className="mt-0.5">ARP, ICMP</p>
        <div className="mt-[3px] flex gap-1 px-px">
          <button className="h-6 flex-1 rounded-md bg-[#0e274c] text-white">Edit Filters</button>
          <button className="h-6 flex-1 rounded-md bg-[#0e274c] text-white">Show All/None</button>
        </div>
      </section>
    </aside>
  );
}

function Workspace() {
  return (
    <main className="flex min-h-0 flex-1 bg-[#f0f0f0]">
      <div className="flex min-w-0 flex-1 flex-col border-b border-r border-t border-[#7f858f]">
        <div className="-mt-px flex min-h-0 flex-1">
          <Topology />
          <div className="flex w-4 shrink-0 flex-col items-center bg-[#f0f0f0] pt-px">
            <button aria-label="Scroll up" className="flex h-4 items-center">
              <Arrow dir="up" />
            </button>
            <div className="flex w-full min-h-0 flex-1 flex-col">
              <div className="h-[19%] w-[15px] bg-[#cdcdcd]" />
            </div>
            <button aria-label="Scroll down" className="flex h-4 items-center">
              <Arrow dir="down" />
            </button>
          </div>
        </div>
        <HScroll thumb="w-[40%] bg-[#cdcdcd]" />
      </div>
      <div className="w-1 shrink-0" />
      <SimulationPanel />
    </main>
  );
}

/* ---------- mode bar ---------- */

function ModeBar() {
  return (
    <div className="flex h-[35px] shrink-0 items-center bg-[#0e274c] text-[11px] text-white">
      <span className="whitespace-nowrap pl-2.5">Time: 00:43:58.735</span>
      <button aria-label="Power cycle devices" className="flex h-7 w-8 shrink-0 items-center justify-center rounded-full border border-white">
        <svg viewBox="0 0 20 20" className="size-5" fill="none" stroke="#fff" strokeWidth="2" aria-hidden="true">
          <path d="M6.500 4.500a8 8 0 1 0 7 0" />
          <path d="M10 0l4 4-5 3z" fill="#fff" stroke="none" />
          <circle cx="10" cy="11.500" r="1" fill="#fff" stroke="none" />
        </svg>
      </button>
      <span className="whitespace-nowrap">PLAY CONTROLS:</span>
      <PlayButton kind="back" label="Go back" className="flex h-8 w-9 items-center justify-center rounded-lg border border-white" />
      <PlayButton kind="play" label="Play" className="flex h-8 w-9 items-center justify-center rounded-lg border border-white bg-[#027aad]" />
      <PlayButton kind="next" label="Go forward" className="flex h-8 w-9 items-center justify-center rounded-lg border border-white" />

      <button className="ml-auto flex h-[26px] w-[77px] items-center justify-center gap-0.5 whitespace-nowrap rounded-[13px] border-2 border-white bg-[#027aad]">
        <svg viewBox="0 0 16 16" className="size-4 shrink-0" fill="none" stroke="#fff" strokeWidth="1.500" aria-hidden="true">
          <path d="M0 2h15M1 5h14M0 8h13M1 11h6M0 14h6" />
          <ellipse cx="12" cy="13" rx="3.500" ry="2.200" />
        </svg>
        <span>Event List</span>
      </button>
      <button className="ml-[3px] flex h-7 w-[90px] items-center justify-center gap-0.5 rounded-[14px] border border-white text-[14px]">
        <svg viewBox="0 0 20 20" className="size-5" aria-hidden="true">
          <circle cx="10" cy="10" r="10" fill="#fff" />
          <path d="M10 5v6l2 3" fill="none" stroke={NAVY} strokeWidth="1.500" />
        </svg>
        Realtime
      </button>
      <button className="ml-0.5 flex h-7 w-[106px] items-center justify-center gap-1 rounded-[14px] border border-white bg-[#027aad] text-[14px] font-bold">
        <svg viewBox="0 0 20 18" className="h-[18px] w-5" fill="#fff" aria-hidden="true">
          <path d="M4 12V6c0-3 3-4 4-6h4c1 2 4 3 4 6v6h4v5h-3v1H3v-1H0v-5z" />
          <path d="M6 7h8v2H6zM4 14h12" fill="#027aad" stroke="#027aad" strokeWidth="1" />
        </svg>
        Simulation
      </button>
    </div>
  );
}

/* ---------- bottom: device palette and PDU list ---------- */

function CloudArt({ lines }) {
  return (
    <svg viewBox="0 0 28 22" className="h-5 w-7" aria-hidden="true">
      <path d="M5 17c-6 0-6-9 0-10 1-5 8-7 10-3 4-3 9-1 9 4 5 1 5 8 0 9-3 3-7 4-9 1-3 4-9 3-10-1z" fill="url(#cloudFill)" />
      {lines && <path d="M9 8h9M8 12h12M11 15h8" stroke="#236f88" strokeWidth="1.500" />}
    </svg>
  );
}

const PALETTE_TOP = [
  ["Network Devices", <span className="relative flex size-7 flex-col items-start"><RouterArt className="h-3 w-[18px]" /><SwitchArt className="mt-1 h-3 w-6" /><span className="absolute right-0 top-1.5 h-3 w-2.5 bg-[#5299b0]" /></span>],
  ["End Devices", <svg viewBox="0 0 28 28" className="size-7" aria-hidden="true"><path d="M16 2l3-2h8v24l-3 3-2-5h-6z" fill="#2b7f97" /><path d="M16 2h8v23h-8z" fill="#5299b0" /><path d="M2 8h15v11H2z" fill="#d3e5eb" stroke="#5299b0" /><path d="M3 20h12l-2 4H0z" fill="#5299b0" /><path d="M13 27l4-12 6-2-2 10z" fill="#6bafc4" /></svg>],
  ["Components", <svg viewBox="0 0 26 20" className="h-5 w-[26px]" aria-hidden="true"><path d="M0 0h26v20H0z" fill="#2d6f84" /><path d="M2 2h7v5H2zM12 1h12v4H12zM2 12h6v6H2zM17 9h6v4h-6z" fill="#73b2c6" /><path d="M10 8h6v6h-6z" fill="#16313c" /><path d="M11 17h13M18 6h6" stroke="#16313c" strokeWidth="1.500" /></svg>],
  ["Connections", <svg viewBox="0 0 28 28" className="size-7" aria-hidden="true"><path d="M27 0L5 14l7 3L0 28l22-12-7-3z" fill="url(#bolt)" /></svg>],
  ["Miscellaneous", <svg viewBox="0 0 26 20" className="h-5 w-[26px]" aria-hidden="true"><path d="M2 3h8l2-3h13l-1 18H3z" fill="#2b7f97" /><path d="M0 4h24l-2 16H3z" fill="url(#cloudFill)" /></svg>],
  ["Multiuser Connection", <CloudArt lines />],
];

const PALETTE_BOTTOM = [
  ["Routers", <RouterArt className="h-5 w-7" />],
  ["Switches", <SwitchArt className="h-4 w-[26px]" />],
  ["Hubs", <svg viewBox="0 0 22 20" className="h-5 w-[22px]" aria-hidden="true"><path d="M0 2l3-2h19l-3 2z" fill="#8ab8c8" /><path d="M0 2h19v18H0z" fill="#5299b0" /><path d="M19 2l3-2v17l-3 3z" fill="#04697f" /><path d="M4 5v12M7 5v12M10 5v12M13 5v12M16 5v12" stroke="#2b7f97" /></svg>],
  ["Wireless Devices", <svg viewBox="0 0 26 18" className="h-[18px] w-[26px]" aria-hidden="true"><path d="M0 2l2-2h24l-2 2z" fill="#8ab8c8" /><path d="M0 2h24v16H0z" fill="#5299b0" /><path d="M24 2l2-2v15l-2 3z" fill="#04697f" /><path d="M6 6q-2 4 0 8M9 7q-1 3 0 6M18 6q2 4 0 8M15 7q1 3 0 6" stroke="#fff" fill="none" strokeWidth="1.300" /><circle cx="12" cy="10" r="1.300" fill="#fff" /></svg>],
  ["Security", <svg viewBox="0 0 16 24" className="h-6 w-4" aria-hidden="true"><path d="M0 1h14v14H0z" fill="#5299b0" /><path d="M14 1l2-1v21l-2 3z" fill="#04697f" /><path d="M0 15h14v9H0z" fill="#5a0d12" /><path d="M3 5l8 1-3 5-4-3zM9 9l4 3-4 0z" fill="#fff" /></svg>],
  ["WAN Emulation", <CloudArt />],
];

function PaletteRow({ items }) {
  return (
    <div className="flex h-[30px] items-center gap-1 pl-[5px]">
      {items.map(([label, art], i) => (
        <button
          key={label}
          aria-label={label}
          className={
            i === 0
              ? "flex h-[30px] w-[30px] shrink-0 items-center justify-center border border-[#24545f] bg-[#8bf3fb]"
              : "flex h-[30px] w-[30px] shrink-0 items-center justify-center"
          }
        >
          {art}
        </button>
      ))}
    </div>
  );
}

const MODELS = ["4331", "4321", "1941", "2901", "2911", "819IOX", "819HGW", "829", "1240", "PT-Router", "PT-Empty", "1841", "2620XM"];

function ModelStrip() {
  return (
    <div className="flex w-[504px] shrink-0 flex-col">
      <div className="flex min-h-0 flex-1 flex-col border border-[#7f858f] bg-white">
        <div className="flex min-h-0 flex-1 gap-1.5 overflow-hidden px-0.5 pt-0.5">
          {MODELS.map((m) => (
            <button
              key={m}
              className="flex h-[35px] w-[34px] shrink-0 flex-col items-center justify-between overflow-hidden rounded-[5px] border border-[#bdbdbd] bg-[#e4e4e4] pt-0.5"
            >
              <RouterArt className="h-5 w-[30px]" />
              <span className="whitespace-nowrap font-['Open_Sans',sans-serif] text-[8px] leading-[11px]">{m}</span>
            </button>
          ))}
        </div>
        <HScroll thumb="w-1/5 bg-[#cdcdcd]" />
      </div>
      <div className="mt-px flex h-5 items-center justify-center border border-black bg-white">2620XM</div>
    </div>
  );
}

const PDU_COLUMNS = [
  ["Fire", "w-[37px]"], ["Last Status", "w-[70px]"], ["Source", "w-[47px]"], ["Destination", "w-[70px]"],
  ["Type", "w-[37px]"], ["Color", "w-[38px]"], ["Time(sec)", "w-16"], ["Periodic", "w-[53px]"],
  ["Num", "w-[37px]"], ["Edit", "w-[37px]"], ["Delete", ""],
];

function BottomPanel() {
  return (
    <section className="flex h-[100px] shrink-0 bg-[#f0f0f0] text-[11px] leading-[14px]">
      <div className="flex w-[210px] shrink-0 flex-col py-[5px]">
        <div className="flex flex-1 flex-col justify-between bg-white py-0.5">
          <PaletteRow items={PALETTE_TOP} />
          <input type="text" aria-label="Search devices" className="mx-[3px] h-5 border border-[#777] bg-white px-1 outline-none" />
          <PaletteRow items={PALETTE_BOTTOM} />
        </div>
      </div>
      <ModelStrip />
      <div className="ml-1 flex w-[15px] shrink-0 items-center border-l border-t border-[#888]">
        <svg viewBox="0 0 8 10" className="ml-0.5 h-2.5 w-2" aria-hidden="true">
          <path d="M0 0l8 5-8 5z" fill="#555" />
        </svg>
      </div>
      <div className="ml-1 flex w-[136px] shrink-0 flex-col items-center gap-[5px] bg-white pt-[5px]">
        <div className="flex items-center gap-1.5">
          <button aria-label="Scenario description" className="flex h-[30px] w-[34px] items-center justify-center rounded-md bg-[#0e274c]">
            <svg viewBox="0 0 16 16" className="size-4" aria-hidden="true">
              <circle cx="8" cy="8" r="8" fill="#fff" />
              <path d="M8 4v1.500M8 7v5" stroke={NAVY} strokeWidth="1.500" />
            </svg>
          </button>
          <span className="relative flex">
            <select aria-label="Scenario" className="h-5 w-[78px] appearance-none border border-[#777] bg-white pl-[3px] text-[11px] leading-[14px]">
              <option>Scenario 0</option>
            </select>
            <svg viewBox="0 0 10 10" className="pointer-events-none absolute right-1 top-[5px] size-2.5" fill="none" stroke="#444" aria-hidden="true">
              <path d="M1 3l4 4 4-4" />
            </svg>
          </span>
        </div>
        <div className="flex gap-[19px] pr-1">
          <button className="h-6 w-[33px] rounded-md bg-[#0e274c] text-white">New</button>
          <button className="h-6 w-10 rounded-md bg-[#0e274c] text-white">Delete</button>
        </div>
        <button className="mr-1 h-6 w-[127px] whitespace-nowrap rounded-md bg-[#0e274c] text-white">Toggle PDU List Window</button>
      </div>
      <div className="mr-px mt-px min-w-0 flex-1 border-l border-r border-t border-[#7f858f] bg-white">
        <table className="w-full table-fixed border-collapse text-left">
          <thead>
            <tr className="h-[23px]">
              {PDU_COLUMNS.map(([c, w], i) => (
                <th key={c} className={`${w} whitespace-nowrap p-0 pl-1 font-normal ${i < 10 ? "border-r border-[#e2e2e2]" : ""}`}>
                  {c}
                </th>
              ))}
            </tr>
          </thead>
        </table>
      </div>
    </section>
  );
}

/* ---------- taskbar ---------- */

function Palace() {
  return (
    <svg viewBox="0 0 78 35" className="h-[35px] w-[78px]" aria-hidden="true">
      <path d="M26 3h28v6H26z" fill="#f0d08a" />
      <path d="M27 3v5M31 3v5M35 3v5M39 3v5M43 3v5M47 3v5M51 3v5" stroke="#b98d3a" />
      <path d="M14 9h52v4H14z" fill="#d9a648" />
      <path d="M6 14h66v16H6z" fill="#e8b95a" />
      <path d="M24 11h30v19H24z" fill="#f5cf78" />
      <path d="M10 17h4v9h-4zM17 17h4v9h-4zM57 17h4v9h-4zM64 17h4v9h-4z" fill="#a06a22" />
      <path d="M28 28v-9a2.500 2.500 0 0 1 5 0v9zM36 29V18a3 3 0 0 1 6 0v11zM45 28v-9a2.500 2.500 0 0 1 5 0v9z" fill="#b97a28" />
      <path d="M23 13v17M34.500 13v17M43.500 13v17M55 13v17" stroke="#fbe6ad" strokeWidth="1.500" />
      <path d="M2 29h74v6H2z" fill="#3d3470" />
      <circle cx="8" cy="29" r="5" fill="#4d9a2a" />
      <circle cx="70" cy="29" r="5" fill="#4d9a2a" />
      <circle cx="15" cy="31" r="3" fill="#2f7b23" />
      <circle cx="63" cy="31" r="3" fill="#2f7b23" />
      <path d="M25 22l3 8h-6zM53 22l3 8h-6z" fill="#2f8a35" />
      <path d="M12 35c8-6 46-6 54 0z" fill="#26b6c9" />
      <ellipse cx="40" cy="33" rx="10" ry="3" fill="#7df5c4" />
      <path d="M9 0l2 3 4-1-2 3 2 3-4-1-2 3-1-4-4-1 4-2z" fill="#c78cf0" />
      <circle cx="62" cy="2" r="2" fill="#59c77a" />
      <circle cx="70" cy="9" r="2" fill="#6ed1e6" />
    </svg>
  );
}

const TASK_ART = {
  folder: (
    <svg viewBox="0 0 16 22" className="h-[22px] w-4" aria-hidden="true">
      <path d="M1 2h12v18H1z" fill="#e5b84a" />
      <path d="M1 2l7 3v17l-7-3z" fill="#ffe08a" />
      <path d="M8 4h6v15l-6 2z" fill="#f4cd65" />
    </svg>
  ),
  chrome: (
    <svg viewBox="0 0 24 24" className="size-[22px]" aria-hidden="true">
      <circle cx="12" cy="12" r="11.500" fill="#fbc116" />
      <path d="M2 6.200A11.500 11.500 0 0 1 22 6.500H12z" fill="#e33b2e" />
      <path d="M2 6.200A11.500 11.500 0 0 0 11 23.500L16.500 14 7 14.500z" fill="#2da94f" />
      <path d="M2 6.200L7 14.500 12 6.500z" fill="#e33b2e" />
      <circle cx="12" cy="12" r="5.800" fill="#fff" />
      <circle cx="12" cy="12" r="4.500" fill="#3f7ff0" />
    </svg>
  ),
  tracer: <TracerIcon className="size-[22px]" />,
  paint: (
    <svg viewBox="0 0 24 24" className="size-[22px]" aria-hidden="true">
      <path d="M12 4c6-1 12 3 11 9-1 3-5 1-7 3s1 6-4 7C5 24 0 19 1 13s5-8 11-9z" fill="#cfe4f2" />
      <circle cx="6" cy="12" r="2" fill="#e0523c" />
      <circle cx="10" cy="8" r="2" fill="#f0b429" />
      <circle cx="16" cy="8" r="2" fill="#52a84b" />
      <circle cx="6" cy="17" r="2" fill="#4a86d8" />
      <circle cx="11" cy="15" r="2.200" fill="#2b2b2b" />
      <path d="M20 5l1 2-7 15-2 1 1-3z" fill="#e58a2f" />
      <path d="M19 0l4 1-1 5h-3z" fill="#c9a27b" />
    </svg>
  ),
};

function Task({ art, label, className }) {
  return (
    <button className={`flex h-full shrink-0 items-center gap-1.5 border-b-2 border-[#9fd0f2] pl-1.5 pt-0.5 text-[12px] ${className}`}>
      <span className="flex w-[22px] shrink-0 justify-center">{TASK_ART[art]}</span>
      <span className="whitespace-nowrap">{label}</span>
    </button>
  );
}

const LAUNCH = "flex w-12 shrink-0 items-center justify-center";

function Taskbar() {
  return (
    <footer className="flex h-10 shrink-0 items-stretch bg-[#2b2b2b] font-['Open_Sans','Noto_Sans',sans-serif] text-white">
      <button aria-label="Start" className={LAUNCH}>
        <svg viewBox="0 0 16 16" className="size-4" fill="#fff" aria-hidden="true">
          <path d="M0 2l7-1v6.500H0zM8 1l8-1v7.500H8zM0 8.500h7V15l-7-1zM8 8.500h8V16l-8-1z" />
        </svg>
      </button>
      <label className="flex w-[344px] shrink-0 items-center border border-[#bdbdbd] bg-[#f2f2f2] pl-[11px]">
        <svg viewBox="0 0 18 18" className="size-[17px] shrink-0" fill="none" stroke="#222" strokeWidth="1.500" aria-hidden="true">
          <circle cx="11" cy="6.500" r="5.500" />
          <path d="M7 10.500l-6 6.500" />
        </svg>
        <input
          type="text"
          aria-label="Поиск"
          placeholder="Введите здесь текст для поиска"
          className="ml-3 min-w-0 flex-1 bg-transparent text-[14px] text-black outline-none placeholder:text-[#333]"
        />
        <Palace />
      </label>
      <button aria-label="Cortana" className={LAUNCH}>
        <svg viewBox="0 0 16 16" className="size-4" aria-hidden="true">
          <circle cx="8" cy="8" r="6.500" fill="none" stroke="#fff" strokeWidth="2" />
        </svg>
      </button>
      <button aria-label="Task view" className={LAUNCH}>
        <svg viewBox="0 0 16 16" className="size-4" fill="none" stroke="#fff" strokeWidth="1.300" aria-hidden="true">
          <path d="M1 0v3h9V0M1 5.500h9v5.500H1zM1 16v-3h9v3M13.500 0v3M13.500 8v8" />
          <path d="M12 4h3v3h-3z" fill="#fff" stroke="none" />
        </svg>
      </button>
      <button aria-label="Calculator" className={LAUNCH}>
        <svg viewBox="0 0 18 24" className="h-6 w-[18px]" aria-hidden="true">
          <rect width="18" height="24" rx="1" fill="#7b8994" />
          <path d="M2 2h14v5H2z" fill="#38b4ea" />
          <path d="M2 9h4v3H2zM7 9h4v3H7zM12 9h4v3h-4zM2 14h4v3H2zM7 14h4v3H7zM2 19h4v3H2zM7 19h4v3H7z" fill="#dbe2e7" />
          <path d="M12 14h4v8h-4z" fill="#1f4e8c" />
        </svg>
      </button>
      <Task art="folder" label="дополнительны..." className="ml-1.5 w-[136px]" />
      <button aria-label="Command prompt" className={`ml-1 ${LAUNCH}`}>
        <svg viewBox="0 0 22 19" className="h-[19px] w-[22px]" aria-hidden="true">
          <path d="M0 0h22v19H0z" fill="#000" stroke="#9a9a9a" />
          <path d="M0 0h22v2H0z" fill="#9a9a9a" />
          <path d="M5 5H3v4h2M7 5.500v1M7 8v1M9 5l2 4M12.500 9H18" stroke="#fff" fill="none" />
        </svg>
      </button>
      <button aria-label="Fork" className={LAUNCH}>
        <svg viewBox="0 0 22 22" className="size-[22px]" aria-hidden="true">
          <circle cx="11" cy="11" r="11" fill="#2f9fe0" />
          <path d="M8 4v6q0 2 3 2t3-2V4M11 4v16" fill="none" stroke="#fff" strokeWidth="1.600" />
        </svg>
      </button>
      <button aria-label="GitKraken" className={LAUNCH}>
        <svg viewBox="0 0 24 24" className="size-[23px]" aria-hidden="true">
          <circle cx="12" cy="12" r="12" fill="#10262c" />
          <path d="M12 4c4 0 5 4 3.500 8h-7C7 8 8 4 12 4z" fill="#1fa08c" />
          <path d="M9 12v7M11 12v9M13 12v9M15 12v7M5 8c-2 5 0 9 3 11M19 8c2 5 0 9-3 11" stroke="#1fa08c" fill="none" strokeWidth="1.300" />
        </svg>
      </button>
      <button aria-label="Git" className={LAUNCH}>
        <svg viewBox="0 0 24 24" className="size-6" aria-hidden="true">
          <path d="M12 0l6 6-6 6-6-6z" fill="#e66a5c" />
          <path d="M6 6l6 6-6 6-6-6z" fill="#6d9df0" />
          <path d="M18 6l6 6-6 6-6-6z" fill="#8ccf6f" />
          <path d="M12 12l6 6-6 6-6-6z" fill="#f5d65c" />
          <path d="M9 5l3 3v10M12 9l4 4" stroke="#222" fill="none" strokeWidth="1.300" />
          <circle cx="12" cy="8" r="1.500" fill="#222" />
          <circle cx="16" cy="13" r="1.500" fill="#222" />
          <circle cx="12" cy="18" r="1.500" fill="#222" />
        </svg>
      </button>
      <Task art="chrome" label="Обучение | Gee..." className="ml-1 w-[136px]" />
      <Task art="tracer" label="Cisco Packet Tra..." className="ml-1 w-36 bg-[#555555]" />
      <Task art="tracer" label="r1" className="ml-1 w-[136px]" />
      <Task art="tracer" label="10.0.0.11" className="ml-2 w-[136px]" />
      <Task art="paint" label="Безымянный - ..." className="ml-2 w-[136px]" />
      <div className="ml-auto flex items-center pr-1">
        <svg viewBox="0 0 18 18" className="size-[18px]" aria-hidden="true">
          <circle cx="9" cy="9" r="9" fill="url(#sun)" />
        </svg>
        <span className="ml-2.5 w-[30px] whitespace-nowrap text-[13px]">27°C</span>
        <button aria-label="Show hidden icons" className="ml-4">
          <svg viewBox="0 0 12 8" className="h-2 w-3" fill="none" stroke="#fff" strokeWidth="1.300" aria-hidden="true">
            <path d="M1 7l5-5 5 5" />
          </svg>
        </button>
        <svg viewBox="0 0 16 11" className="ml-2.5 h-[11px] w-4" aria-hidden="true">
          <path d="M4 11c-5 0-5-6 0-6 1-6 8-6 9-1 4 1 4 7 0 7z" fill="#e8e8e8" />
          <path d="M1 7c3-3 7 0 12 4H4c-3 0-4-2-3-4z" fill="#bdbdbd" />
        </svg>
        <svg viewBox="0 0 16 14" className="ml-2 h-3.5 w-4" fill="none" stroke="#fff" strokeWidth="1.200" aria-hidden="true">
          <path d="M1 5h2l4-3.500v11L3 9H1zM9 5q1 2 0 4M11 3q3 4 0 8M13 1.500q4 5.500 0 11" />
        </svg>
        <span className="ml-2 w-[25px] text-[12px]">ENG</span>
        <div className="ml-3 w-14 text-center text-[11px] leading-[18px]">
          <div>13:56</div>
          <div>19.08.2022</div>
        </div>
        <button aria-label="Notifications" className="relative ml-4 size-6">
          <svg viewBox="0 0 24 24" className="size-6" aria-hidden="true">
            <path d="M0 1h16v13H9l-4 4v-4H0z" fill="#fff" />
            <path d="M3 4.500h10M3 7.500h10M3 10.500h7" stroke="#2b2b2b" />
            <circle cx="16" cy="16" r="7.500" fill="#3a3a3a" stroke="#aaa" />
          </svg>
          <span className="absolute bottom-0.5 right-[5px] text-[10px] leading-3">2</span>
        </button>
        <span className="ml-3 h-10 w-px bg-[#777]" />
      </div>
    </footer>
  );
}

export default function App() {
  return (
    <div className="grid h-screen grid-cols-[1920fr_2052fr] overflow-hidden bg-white">
      <Gradients />
      <div className="flex min-w-0 flex-col overflow-hidden font-['Liberation_Sans',Arial,sans-serif] text-black">
        <TitleBar />
        <MenuBar />
        <Toolbars />
        <ViewBar />
        <Workspace />
        <ModeBar />
        <BottomPanel />
        <Taskbar />
      </div>
    </div>
  );
}
